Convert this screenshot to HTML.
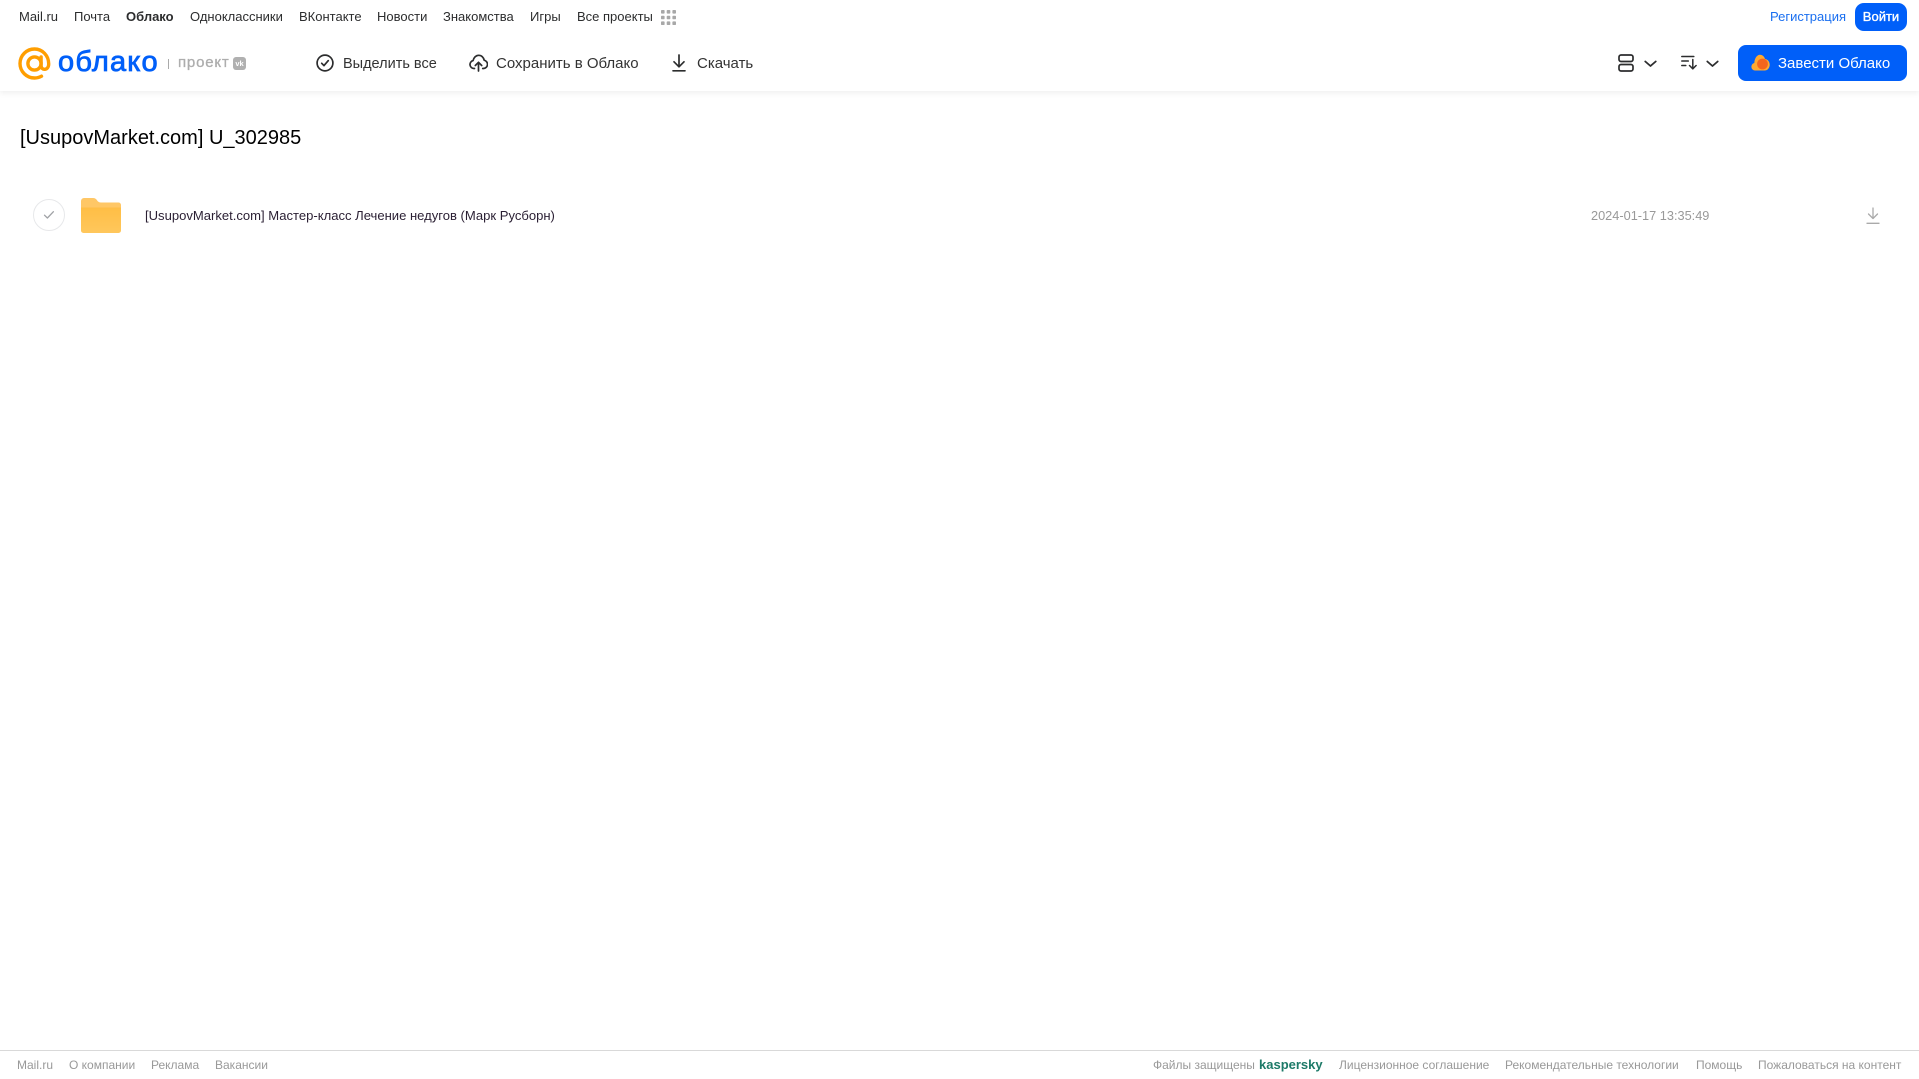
<!DOCTYPE html>
<html lang="ru"><head><meta charset="utf-8"><title>Облако</title>
<style>
html,body{margin:0;padding:0;background:#fff}
body{width:1919px;height:1079px;position:relative;overflow:hidden;font-family:"Liberation Sans",sans-serif}
.t{position:absolute;white-space:nowrap;line-height:20px;height:20px}
.n{font-size:13px;color:#2c2d2e;top:7px}
.b{font-size:15px;color:#333;top:54px}
.f{font-size:12px;color:#999;top:1055px}
svg{position:absolute;display:block}
</style></head><body>
<div style="position:absolute;left:0;top:0;width:1919px;height:91px;background:#fff;box-shadow:0 2px 6px rgba(0,0,0,.07)"></div>

<span class="t n" style="left:19px">Mail.ru</span>
<span class="t n" style="left:74px">Почта</span>
<span class="t n" style="left:126px;font-weight:bold">Облако</span>
<span class="t n" style="left:190px">Одноклассники</span>
<span class="t n" style="left:299px">ВКонтакте</span>
<span class="t n" style="left:377px">Новости</span>
<span class="t n" style="left:443px">Знакомства</span>
<span class="t n" style="left:530px">Игры</span>
<span class="t n" style="left:577px">Все проекты</span>
<svg style="left:661px;top:10px" width="15" height="15" viewBox="0 0 15 15" fill="#a8a8a8"><rect x="0" y="0" width="3.6" height="3.6" rx=".8"/><rect x="5.7" y="0" width="3.6" height="3.6" rx=".8"/><rect x="11.4" y="0" width="3.6" height="3.6" rx=".8"/><rect x="0" y="5.7" width="3.6" height="3.6" rx=".8"/><rect x="5.7" y="5.7" width="3.6" height="3.6" rx=".8"/><rect x="11.4" y="5.7" width="3.6" height="3.6" rx=".8"/><rect x="0" y="11.4" width="3.6" height="3.6" rx=".8"/><rect x="5.7" y="11.4" width="3.6" height="3.6" rx=".8"/><rect x="11.4" y="11.4" width="3.6" height="3.6" rx=".8"/></svg>

<span class="t" style="left:1770px;top:7px;font-size:13px;color:#1a6ff0">Регистрация</span>
<div style="position:absolute;left:1855px;top:3px;width:52px;height:28px;border-radius:9px;background:#005ff9;color:#fff;font-size:13px;-webkit-text-stroke:.35px #fff;line-height:27px;text-align:center">Войти</div>

<svg style="left:18px;top:47px" width="33" height="33" viewBox="0 0 33 33" fill="none" stroke="#ff9e00" stroke-width="3.4" stroke-linecap="round"><circle cx="16.5" cy="16.5" r="6.6"/><path d="M23.1 10v8.500c0 5.300 7.600 5.300 7.600-1.600C30.700 8.700 24.500 2 16.500 2 8.500 2 2 8.500 2 16.500S8.500 31 16.500 31c2.800 0 5-.6 7-1.800"/></svg>
<span class="t" style="left:58px;top:45px;font-size:29px;line-height:34px;height:34px;color:#005ff9;-webkit-text-stroke:.8px #005ff9;letter-spacing:1.200px">облако</span>
<div style="position:absolute;left:168px;top:59px;width:1px;height:10px;background:#aaa"></div>
<span class="t" style="left:178px;top:53px;font-size:15px;color:#adadad;-webkit-text-stroke:.3px #adadad;letter-spacing:.8px">проект</span>
<div style="position:absolute;left:233px;top:57px;width:13px;height:13px;border-radius:3px;background:#b0b0b0;color:#fff;font-size:7.500px;font-weight:bold;line-height:13px;text-align:center">vk</div>

<svg style="left:316px;top:54px" width="18" height="18" viewBox="0 0 18 18" fill="none" stroke="#2c2d2e" stroke-width="1.700" stroke-linecap="round" stroke-linejoin="round"><circle cx="9" cy="9" r="7.900"/><path d="M5.700 9.300 8 11.600l4.300-5"/></svg>
<span class="t b" style="left:343px;font-size:14.500px">Выделить все</span>
<svg style="left:469px;top:54px" width="19" height="18" viewBox="0 0 19 18" fill="none" stroke="#2c2d2e" stroke-width="1.700" stroke-linecap="round" stroke-linejoin="round"><path d="M5.500 14.500H5a4 4 0 0 1-.9-7.900C4.800 3.500 7 1.300 9.700 1.300c2.800 0 5 2.100 5.500 4.900a4.200 4.200 0 0 1-.8 8.300h-.7"/><path d="M9.500 17V8.500M6.300 11.500l3.200-3.200 3.200 3.200"/></svg>
<span class="t b" style="left:496px">Сохранить в Облако</span>
<svg style="left:671px;top:54px" width="16" height="18" viewBox="0 0 16 18" fill="none" stroke="#2c2d2e" stroke-width="1.700" stroke-linecap="round" stroke-linejoin="round"><path d="M8 1v11.500M3 7.800l5 5 5-5M2 16.800h12"/></svg>
<span class="t b" style="left:697px">Скачать</span>

<svg style="left:1618px;top:54px" width="16" height="18" viewBox="0 0 16 18" fill="none" stroke="#2c2d2e" stroke-width="1.700"><rect x="1" y="1" width="14" height="6.500" rx="2"/><rect x="1" y="10.500" width="14" height="6.500" rx="2"/></svg>
<svg style="left:1644px;top:60px" width="13" height="8" viewBox="0 0 13 8" fill="none" stroke="#2c2d2e" stroke-width="1.800" stroke-linecap="round" stroke-linejoin="round"><path d="M1.300 1.500 6.500 6l5.200-4.500"/></svg>
<svg style="left:1681px;top:55px" width="16" height="15" viewBox="0 0 16 15" fill="none" stroke="#2c2d2e" stroke-width="1.500" stroke-linecap="round" stroke-linejoin="round"><path d="M.8 1.500h12M.8 6h6.500M.8 10.500h4M11.800 4.500v9M8.500 10.500l3.300 3.300 3.300-3.300"/></svg>
<svg style="left:1706px;top:60px" width="13" height="8" viewBox="0 0 13 8" fill="none" stroke="#2c2d2e" stroke-width="1.800" stroke-linecap="round" stroke-linejoin="round"><path d="M1.300 1.500 6.500 6l5.200-4.500"/></svg>

<div style="position:absolute;left:1738px;top:45px;width:169px;height:36px;border-radius:8px;background:#005ff9"></div>
<svg style="left:1751px;top:54px" width="19" height="17" viewBox="0 0 19 17"><path d="M4 16.500a3.800 3.800 0 0 1-.7-7.500C3.600 4.200 6 .8 9 .8c2.500 0 4.400 2 5 4.200 2.700.2 4.700 2.800 4.700 5.700 0 3.300-2.300 5.800-5 5.800z" fill="#ffa930"/><circle cx="11.500" cy="10" r="5.400" fill="#f4661e"/></svg>
<span class="t b" style="left:1778px;color:#fff">Завести Облако</span>

<span class="t" style="left:20px;top:125px;font-size:20px;line-height:26px;height:26px;color:#000">[UsupovMarket.com] U_302985</span>

<div style="position:absolute;left:33px;top:199px;width:30px;height:30px;border:1px solid #e7e8ea;border-radius:50%;background:#fff"></div>
<svg style="left:43px;top:210px" width="12" height="10" viewBox="0 0 12 10" fill="none" stroke="#a0a2a6" stroke-width="1.300" stroke-linecap="round" stroke-linejoin="round"><path d="M1.500 5.200 4.400 8l6-6.300"/></svg>
<svg style="left:81px;top:198px" width="40" height="35" viewBox="0 0 40 35"><defs><linearGradient id="g" x1="0" y1="0" x2="0" y2="1"><stop offset="0" stop-color="#ffbe45"/><stop offset="1" stop-color="#ffc75c"/></linearGradient></defs><path d="M0 3a3 3 0 0 1 3-3h9c2 0 3 .8 4 2.200C17 3.600 18 4.500 20 4.500h17.500A2.500 2.500 0 0 1 40 7v5H0z" fill="#ffc766"/><path d="M0 9.500h40V32.500a2.500 2.500 0 0 1-2.500 2.500H2.500A2.500 2.500 0 0 1 0 32.500z" fill="url(#g)"/></svg>
<span class="t" style="left:145px;top:206px;font-size:13.060px;color:#2a1f33">[UsupovMarket.com] Мастер-класс Лечение недугов (Марк Русборн)</span>
<span class="t" style="left:1591px;top:206px;font-size:12.750px;color:#999">2024-01-17 13:35:49</span>
<svg style="left:1866px;top:207px" width="14" height="18" viewBox="0 0 14 18" fill="none" stroke="#aaa" stroke-width="1.300" stroke-linecap="round" stroke-linejoin="round"><path d="M7 1v10.500M2.500 7l4.500 4.500L11.500 7M1 16.300h12"/></svg>

<div style="position:absolute;left:0;top:1050px;width:1919px;height:1px;background:#d9d9d9"></div>
<span class="t f" style="left:17px">Mail.ru</span>
<span class="t f" style="left:69px">О компании</span>
<span class="t f" style="left:151px">Реклама</span>
<span class="t f" style="left:215px">Вакансии</span>
<span class="t f" style="left:1153px">Файлы защищены</span>
<span class="t" style="left:1259px;top:1055px;font-size:13px;font-weight:bold;color:#1d7a68">kaspersky</span>
<span class="t f" style="left:1339px">Лицензионное соглашение</span>
<span class="t f" style="left:1505px">Рекомендательные технологии</span>
<span class="t f" style="left:1696px">Помощь</span>
<span class="t f" style="left:1758px">Пожаловаться на контент</span>
</body></html>
